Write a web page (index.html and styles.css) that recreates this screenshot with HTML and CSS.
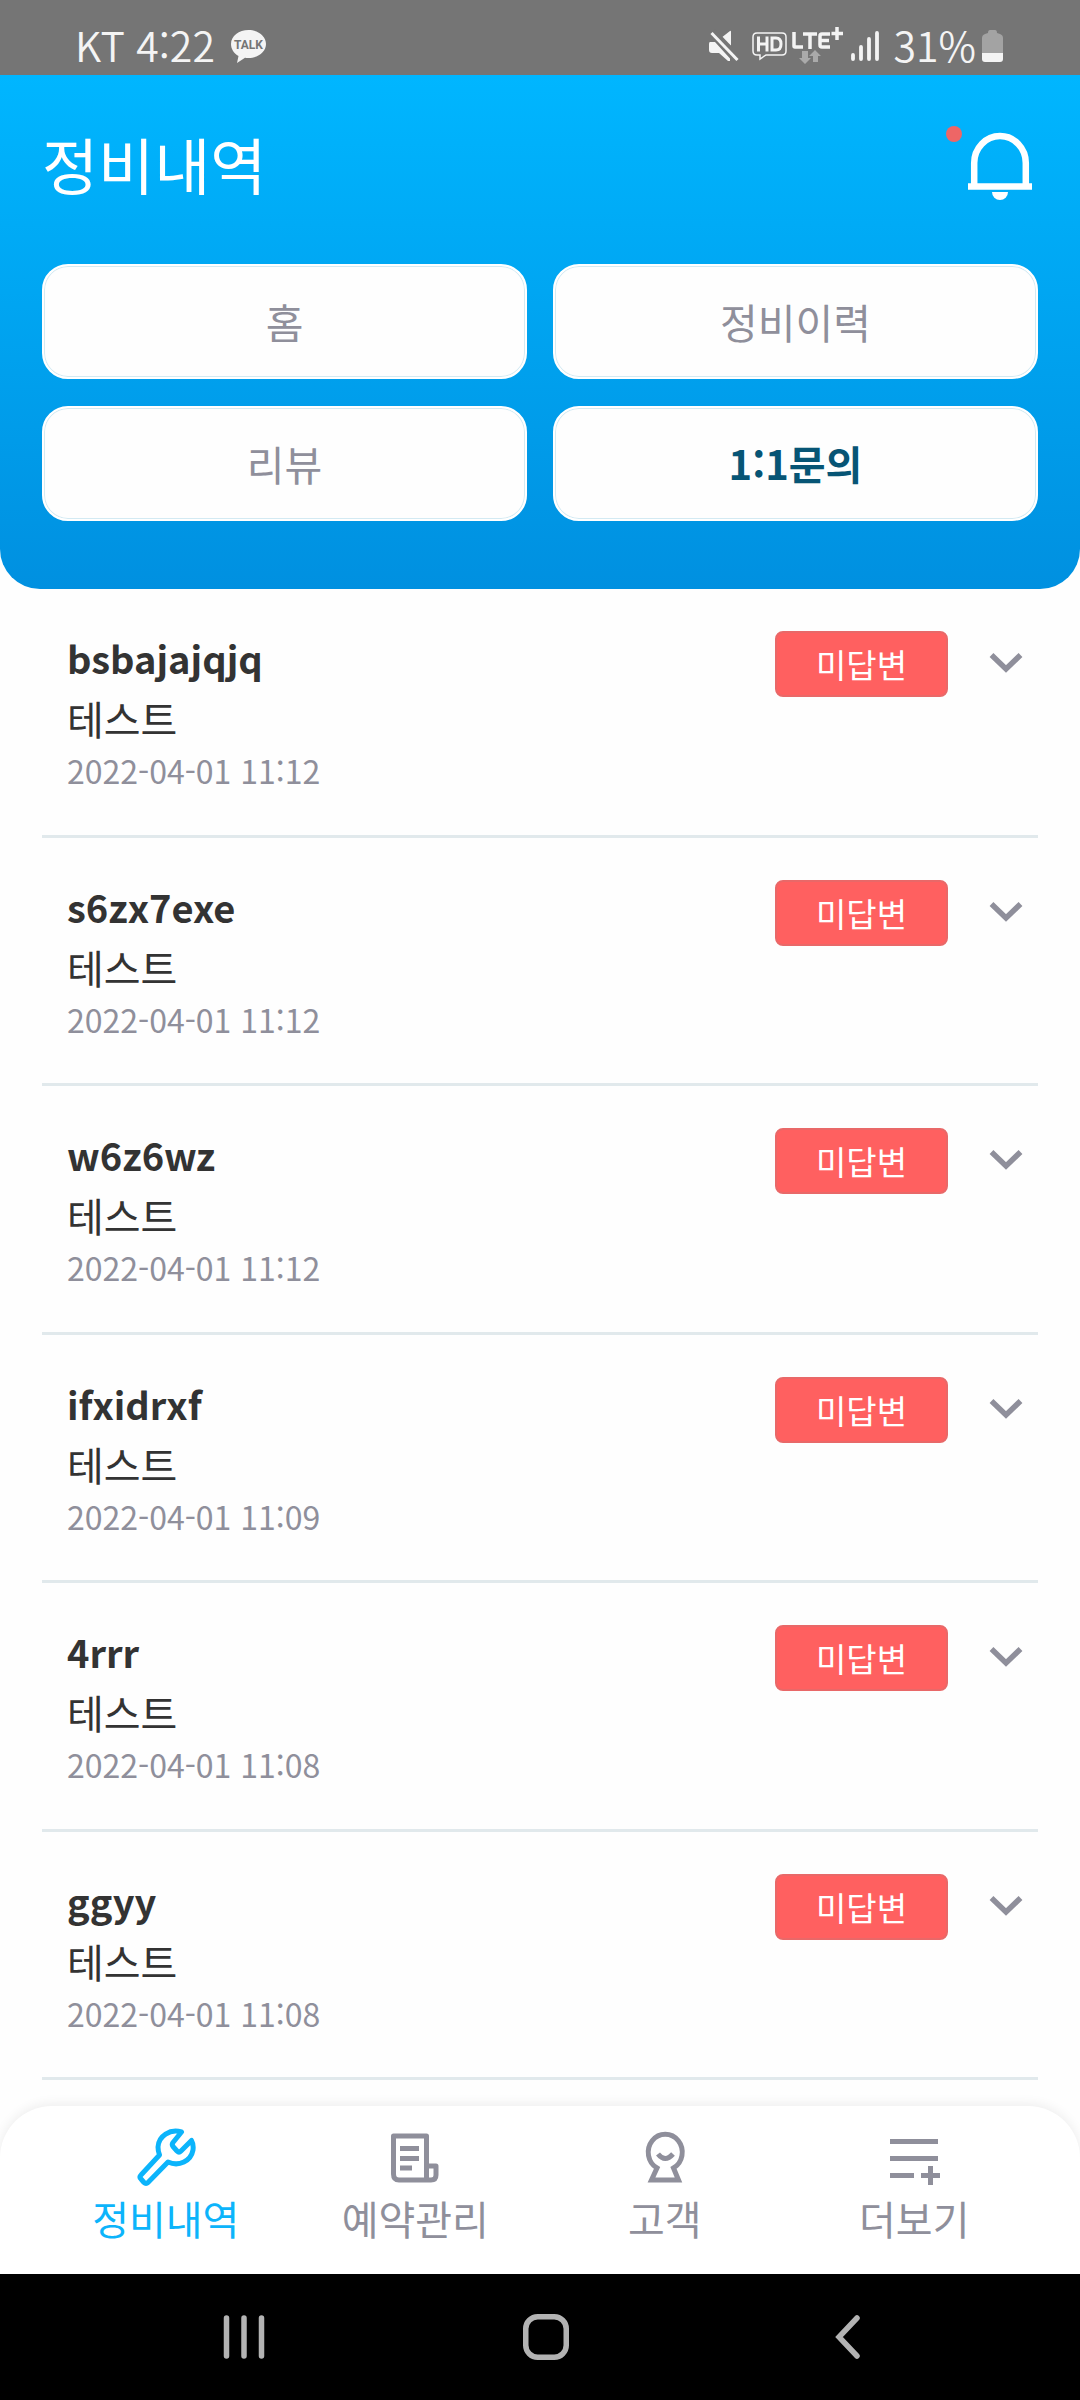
FILE: index.html
```html
<!DOCTYPE html>
<html lang="ko">
<head>
<meta charset="utf-8">
<meta name="viewport" content="width=device-width">
<title>정비내역</title>
<link rel="stylesheet" href="styles.css">
</head>
<body>
<div class="status">
  <div class="status-group">
    <span class="status-text">KT 4:22</span>
    <svg class="talk" width="35" height="34" viewBox="0 0 35 34" role="img" aria-label="카카오톡">
      <path fill="#f4f4f4" d="M17.500 1C8 1 0 7 0 15c0 5 3 9.500 7.500 12L6 34l8-5.300c1 .2 2.300.3 3.500.3C27 29 35 23 35 15S27 1 17.500 1Z"/>
      <text x="17.500" y="20" text-anchor="middle" font-family="Roboto, sans-serif" font-weight="700" font-size="12" fill="#757575">TALK</text>
    </svg>
  </div>
  <div class="status-group">
    <svg width="30" height="34" viewBox="0 0 30 34" fill="#f4f4f4" aria-hidden="true">
      <path d="M1 13h5l15 16.500V32l-2 0-9-8H3q-3 0-3-3v-6q0-2 1-2ZM12 9l9-7q1-.6 1 1v14Z"/>
      <path d="m2.500 4 26 27" stroke="#757575" stroke-width="5" transform="translate(2 -2)" fill="none"/>
      <path d="m2.500 4 26 27" stroke="#f4f4f4" stroke-width="3" fill="none"/>
    </svg>
    <svg class="hd" width="35" height="34" viewBox="0 0 35 34" aria-hidden="true">
      <path fill="none" stroke="#f4f4f4" stroke-width="1.500" d="M5 4h25q4 0 4 4v14q0 4-4 4H14l-6 4v-4H5q-4 0-4-4V8q0-4 4-4Z"/>
      <path fill="none" stroke="#f4f4f4" stroke-width="3" d="M6.500 7.500v15M15 7.500v15M6.500 15H15M20 9h4q5 0 5 6t-5 6h-4Z"/>
    </svg>
    <svg class="lte" width="52" height="38" viewBox="0 0 52 38" role="img" aria-label="LTE+">
      <path fill="none" stroke="#f4f4f4" stroke-width="3.500" stroke-linejoin="round" d="M2 5v14q0 1 1 1h8M11 7h14M18 7v15M38 7h-8q-2 0-2 2v9q0 2 2 2h8M28 13.500h9M39.500 6.500H51M45 0v13" />
      <path fill="#aaa" d="M10 24h6v7h3l-6 6-6-6h3ZM21 35h5v-6h3l-6-6-6 6h4Z"/>
    </svg>
    <svg class="signal" width="28" height="34" viewBox="0 0 28 34" stroke="#f4f4f4" stroke-width="3.800" stroke-linecap="round" aria-hidden="true">
      <path d="M2 26v4M10 18v12M18 10v20M26 4v26"/>
    </svg>
    <span class="status-text">31%</span>
    <svg class="battery" width="21" height="34" viewBox="0 0 21 34" aria-hidden="true">
      <path fill="#a3a3a3" d="M6 4q0-3 2-3h5q2 0 2 3l3 1q3 1 3 4v16H0V9q0-3 3-4Z"/>
      <path fill="#f4f4f4" d="M0 24h21v6q0 3-3 3H3q-3 0-3-3Z"/>
    </svg>
  </div>
</div>

<header class="header">
  <div class="header-top">
    <h1 class="title">정비내역</h1>
    <button class="bell" aria-label="알림">
      <svg width="64" height="72" viewBox="0 0 64 72" aria-hidden="true">
        <path fill="none" stroke="#fff" stroke-width="6.500" d="M6.200 54V32a25.800 27 0 0 1 51.600 0v22M0 55.500h64"/>
        <path fill="#fff" d="M24 61h16a8 8 0 0 1-16 0Z"/>
      </svg>
      <span class="bell-dot"></span>
    </button>
  </div>
  <nav class="tabs">
    <button class="tab">홈</button>
    <button class="tab">정비이력</button>
    <button class="tab">리뷰</button>
    <button class="tab tab-active">1:1문의</button>
  </nav>
</header>

<svg class="defs" width="0" height="0" aria-hidden="true">
  <symbol id="chevron" viewBox="0 0 34 22"><path d="m2.500 3 14.500 14L31.500 3" fill="none" stroke="#8f8f9b" stroke-width="5.500"/></symbol>
</svg>

<main class="list">
  <article class="row">
    <div class="info"><h2 class="name">bsbajajqjq</h2><p class="subject">테스트</p><time class="date">2022-04-01 11:12</time></div>
    <span class="badge">미답변</span>
    <button class="toggle" aria-label="펼치기"><svg width="34" height="22"><use href="#chevron"/></svg></button>
  </article>
  <article class="row">
    <div class="info"><h2 class="name">s6zx7exe</h2><p class="subject">테스트</p><time class="date">2022-04-01 11:12</time></div>
    <span class="badge">미답변</span>
    <button class="toggle" aria-label="펼치기"><svg width="34" height="22"><use href="#chevron"/></svg></button>
  </article>
  <article class="row">
    <div class="info"><h2 class="name">w6z6wz</h2><p class="subject">테스트</p><time class="date">2022-04-01 11:12</time></div>
    <span class="badge">미답변</span>
    <button class="toggle" aria-label="펼치기"><svg width="34" height="22"><use href="#chevron"/></svg></button>
  </article>
  <article class="row">
    <div class="info"><h2 class="name">ifxidrxf</h2><p class="subject">테스트</p><time class="date">2022-04-01 11:09</time></div>
    <span class="badge">미답변</span>
    <button class="toggle" aria-label="펼치기"><svg width="34" height="22"><use href="#chevron"/></svg></button>
  </article>
  <article class="row">
    <div class="info"><h2 class="name">4rrr</h2><p class="subject">테스트</p><time class="date">2022-04-01 11:08</time></div>
    <span class="badge">미답변</span>
    <button class="toggle" aria-label="펼치기"><svg width="34" height="22"><use href="#chevron"/></svg></button>
  </article>
  <article class="row">
    <div class="info"><h2 class="name">ggyy</h2><p class="subject">테스트</p><time class="date">2022-04-01 11:08</time></div>
    <span class="badge">미답변</span>
    <button class="toggle" aria-label="펼치기"><svg width="34" height="22"><use href="#chevron"/></svg></button>
  </article>
</main>

<nav class="menu">
  <a class="menu-item menu-active" href="#repair">
    <svg width="60" height="60" viewBox="0 0 60 60" fill="none" stroke="currentColor" stroke-width="5" stroke-linejoin="round" aria-hidden="true">
      <path d="M45.500 5C34 1.500 22.500 9 22 20q0 4 1.500 8L5 48q-2 2 0 4l3 3.500q2 2 4 0L32 35c11 5 23-1 25-12 .5-4 0-7-1.500-9.500L45 24q-2 2-4 0l-4-4.500q-1.500-2 0-4Z"/>
    </svg>
    <span>정비내역</span>
  </a>
  <a class="menu-item" href="#booking">
    <svg width="60" height="60" viewBox="0 0 60 60" fill="none" stroke="currentColor" stroke-width="5" stroke-linejoin="round" aria-hidden="true">
      <path d="M8.500 9h33v44H14q-5.500 0-5.500-6ZM41.500 39H51v9q0 5-5 5h-4M15 21.500h19M15 31.500h19M15 41h12"/>
    </svg>
    <span>예약관리</span>
  </a>
  <a class="menu-item" href="#customer">
    <svg width="60" height="60" viewBox="0 0 60 60" fill="none" stroke="currentColor" stroke-width="5" aria-hidden="true">
      <path d="M22 41a17 18 0 1 1 16.500 0L43.500 53h-27ZM23 27q7 9 15 0"/>
    </svg>
    <span>고객</span>
  </a>
  <a class="menu-item" href="#more">
    <svg width="60" height="60" viewBox="0 0 60 60" fill="none" stroke="currentColor" stroke-width="5" aria-hidden="true">
      <path d="M6 14.500h48M6 31.500h48M6 48.500h24M37 48.500h19M46.500 39v19"/>
    </svg>
    <span>더보기</span>
  </a>
</nav>

<div class="system">
  <button class="key" aria-label="최근 앱"><svg width="46" height="46" viewBox="0 0 46 46" fill="none" stroke="#b3b3b3" stroke-width="5.500" stroke-linecap="round"><path d="M5.500 4v38M23 4v38M40.500 4v38"/></svg></button>
  <button class="key" aria-label="홈"><svg width="46" height="46" viewBox="0 0 46 46" fill="none" stroke="#b3b3b3" stroke-width="5.500"><rect x="2.750" y="2.750" width="40.500" height="40.500" rx="12"/></svg></button>
  <button class="key" aria-label="뒤로"><svg width="46" height="46" viewBox="0 0 46 46" fill="none" stroke="#b3b3b3" stroke-width="5.500" stroke-linecap="round"><path d="M32 4 14 23l18 19"/></svg></button>
</div>
</body>
</html>
```
FILE: styles.css
```css
* {
  box-sizing: border-box;
}

body {
  margin: 0;
  min-height: 100vh;
  display: flex;
  flex-direction: column;
  background: #fefefe;
  color: #333;
  font-family: "Noto Sans CJK KR", sans-serif;
}

h1, h2, p {
  margin: 0;
}

button {
  padding: 0;
  border: 0;
  background: none;
  font-family: inherit;
}

svg {
  display: block;
}

.defs {
  position: absolute;
}

/* Phone status bar */
.status {
  height: 75px;
  padding: 16px 77px 0 75px;
  display: flex;
  justify-content: space-between;
  align-items: center;
  background: #757575;
}

.status-group {
  display: flex;
  align-items: center;
}

.status-text {
  padding-bottom: 4px;
  color: #f4f4f4;
  font-size: 41px;
  font-weight: 350;
  line-height: 48px;
}

.talk {
  margin-left: 16px;
}

.hd {
  margin-left: 13px;
}

.lte {
  margin-left: 5px;
}

.signal {
  margin: 0 15px 0 7px;
}

.battery {
  margin-left: 6px;
}

/* Header */
.header {
  padding: 45px 42px 68px;
  border-radius: 0 0 40px 40px;
  background: linear-gradient(#00b6ff, #0090e0);
}

.header-top {
  display: flex;
  justify-content: space-between;
  align-items: flex-start;
  padding-right: 6px;
}

.title {
  color: #fff;
  font-size: 61px;
  font-weight: 400;
  line-height: 88px;
}

.bell {
  position: relative;
  margin-top: 11px;
}

.bell-dot {
  position: absolute;
  top: -5px;
  left: -22px;
  width: 16px;
  height: 16px;
  border-radius: 50%;
  background: #ee6666;
}

.tabs {
  margin-top: 56px;
  display: grid;
  grid-template-columns: 1fr 1fr;
  gap: 27px 26px;
}

.tab {
  height: 115px;
  padding-bottom: 2px;
  border: 2px solid #fff;
  border-radius: 26px;
  background: #fefefe;
  box-shadow: inset 0 0 0 1px #d3eaf3;
  color: #8f8f9b;
  font-size: 41px;
  line-height: 60px;
}

.tab-active {
  color: #075575;
  font-size: 40px;
  font-weight: 700;
}

/* Enquiries */
.list {
  flex: 1;
  display: grid;
  padding: 0 42px 26px;
}

.row {
  display: flex;
  align-items: flex-start;
  padding: 42px 15px 35px 25px;
  border-bottom: 3px solid #e1e9ec;
}

.info {
  flex: 1;
  margin-top: -3px;
}

.name {
  font-size: 38px;
  font-weight: 700;
  line-height: 60px;
}

.subject {
  font-size: 40px;
  line-height: 60px;
}

.date {
  display: block;
  color: #8f8f9b;
  font-size: 32px;
  line-height: 44px;
}

.badge {
  width: 173px;
  border: 2px solid #e96868;
  border-radius: 8px;
  background: #ff6060;
  color: #fff;
  font-size: 33px;
  line-height: 62px;
  text-align: center;
}

.toggle {
  margin: 21px 0 0 41px;
}

/* App menu */
.menu {
  display: grid;
  grid-template-columns: repeat(4, 1fr);
  padding: 21px 41px 26px;
  border-radius: 52px 52px 0 0;
  background: #fff;
  box-shadow: 0 -2px 12px rgba(0, 0, 0, 0.07);
}

.menu-item {
  display: flex;
  flex-direction: column;
  align-items: center;
  color: #8f8f9b;
  font-size: 40px;
  line-height: 60px;
  text-decoration: none;
}

.menu-item span {
  margin-top: 1px;
}

.menu-active {
  color: #0cb4fb;
}

/* Phone navigation keys */
.system {
  height: 126px;
  padding: 0 81px 0 93px;
  display: grid;
  grid-template-columns: repeat(3, 1fr);
  background: #000;
}

.key {
  display: grid;
  place-items: center;
}
```
